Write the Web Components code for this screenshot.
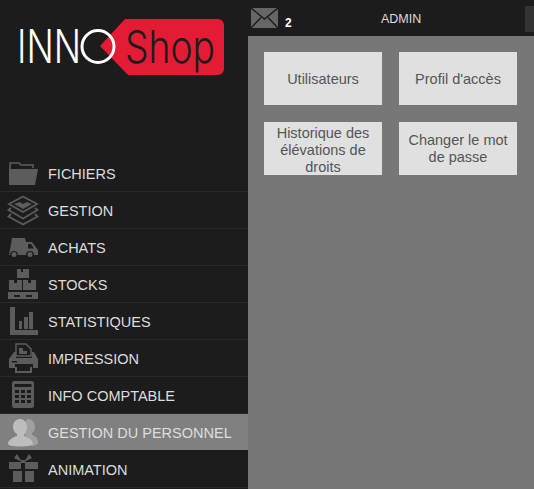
<!DOCTYPE html>
<html lang="fr">
<head>
<meta charset="utf-8">
<title>InnoShop</title>
<style>
html,body{margin:0;height:100%;overflow:hidden;background:#1c1c1c;}
body{font-family:"Liberation Sans",Arial,sans-serif;}
</style>
</head>
<body>
<app-shell>
  <inno-logo slot="logo"></inno-logo>
  <nav-item slot="nav" icon="folder">FICHIERS</nav-item>
  <nav-item slot="nav" icon="layers">GESTION</nav-item>
  <nav-item slot="nav" icon="truck">ACHATS</nav-item>
  <nav-item slot="nav" icon="stocks">STOCKS</nav-item>
  <nav-item slot="nav" icon="stats">STATISTIQUES</nav-item>
  <nav-item slot="nav" icon="printer">IMPRESSION</nav-item>
  <nav-item slot="nav" icon="calc">INFO COMPTABLE</nav-item>
  <nav-item slot="nav" icon="users" active>GESTION DU PERSONNEL</nav-item>
  <nav-item slot="nav" icon="gift">ANIMATION</nav-item>
  <top-bar slot="top" count="2">ADMIN</top-bar>
  <tile-button>Utilisateurs</tile-button>
  <tile-button>Profil d'accès</tile-button>
  <tile-button tall>Historique des élévations de droits</tile-button>
  <tile-button>Changer le mot de passe</tile-button>
</app-shell>
<script>
const icons = {
  folder: `<path d="M4 27V8h9l2 2h12v3" fill="none" stroke="currentColor" stroke-width="1.6"/><path d="M3 30V14h29l-3 16z" fill="currentColor"/>`,
  layers: `<path d="M17 4.500 31 12 17 20 3 12z" fill="none" stroke="currentColor" stroke-width="1.800"/><path d="M8 12l6-2 3 2 4-2 5 2-9 5z" fill="currentColor"/><path d="M5 16 2.500 18 17 26.500 31.500 18 29 16" fill="none" stroke="currentColor" stroke-width="1.800"/><path d="M5 22 2.500 24.500 17 32.500 31.500 24.500 29 22" fill="none" stroke="currentColor" stroke-width="1.800"/>`,
  truck: `<path d="M6 9h13l1 4h6l6 8v5h-4a4 4 0 0 0-8 0H12a4 4 0 0 0-8 0H3z" fill="currentColor"/><path d="M22 15h3l3 4.500h-6z" fill="#1c1c1c"/><circle cx="8" cy="25.500" r="2.500" fill="currentColor"/><circle cx="24" cy="25.500" r="2.500" fill="currentColor"/>`,
  stocks: `<path d="M11 3h4v3h2V3h6v9H11zM3 14h5v3h3v-3h5v10H3zM17 14h5v3h3v-3h5v10H17z" fill="currentColor"/><path d="M2 26h30v7H2z" fill="currentColor"/><path d="M8 29h6v2H8zM20 29h6v2h-6z" fill="#1c1c1c"/>`,
  stats: `<path d="M4 4h5v23h23v5H4z" fill="currentColor"/><path d="M13 18h3v8h-3zM18 14h4v12h-4zM23 9h4v17h-4z" fill="currentColor"/>`,
  printer: `<path d="M10 16V4h10l5 5v7z" fill="none" stroke="currentColor" stroke-width="1.500"/><path d="M13 8h4v3h4v3h-8z" fill="currentColor"/><path d="M8 12h2v6h16v-6h2l4 7v9h-5v-4H9v4H3v-9z" fill="currentColor"/><path d="M10 27v5h15v-5" fill="none" stroke="currentColor" stroke-width="2"/><path d="M6 21h5v1.500H6z" fill="#1c1c1c"/>`,
  calc: `<rect x="6" y="4" width="22" height="27" rx="2.500" fill="currentColor"/><path d="M8.500 7h17v3h-17z" fill="#1c1c1c"/><path d="M9 13h4v3H9zM15 13h4v3h-4zM21 13h4v3h-4zM9 18h4v3H9zM15 18h4v3h-4zM21 18h4v3h-4zM9 23h4v3H9zM15 23h4v3h-4zM21 23h4v3h-4z" fill="#1c1c1c"/>`,
  users: `<path d="M22 5c4 0 7 3 7 8 0 3-1 5-3 6v2c4 1 6 3 6 8 0 1-3 3-7 3 0-6-3-9-7-11 1-2 1-4 1-6 0-4 0-9 3-10z" fill="#a0a0a0"/><path d="M14 5c4 0 7 3 7 8 0 3-1 6-3 7v2c4 1 9 4 9 8 0 1-5 2.500-13 2.500S2 31 2 30c0-4 5-7 9-8v-2c-2-1-4-4-4-7 0-5 3-8 7-8z" fill="currentColor"/>`,
  gift: `<path d="M11 3l5 8-8-4zM23 3l-5 8 8-4z" fill="currentColor"/><path d="M3 11h12v7H3zM19 11h13v7H19zM15 9h4v3h-4zM7 20h9v11H7zM19 20h9v11h-9z" fill="currentColor"/>`
};

class AppShell extends HTMLElement {
  constructor() {
    super();
    this.attachShadow({ mode: "open" }).innerHTML = `<style>
      :host{display:grid;grid-template-columns:248px 1fr;grid-template-rows:36px 1fr;width:534px;height:489px;background:#1c1c1c;overflow:hidden;}
      .side{grid-row:1 / span 2;display:flex;flex-direction:column;}
      nav{display:flex;flex-direction:column;}
      main{background:#777;padding:16px;display:grid;grid-template-columns:118px 118px;grid-auto-rows:53px;gap:17px;align-content:start;}
    </style>
    <div class="side"><slot name="logo"></slot><nav><slot name="nav"></slot></nav></div>
    <slot name="top"></slot>
    <main><slot></slot></main>`;
  }
}

class InnoLogo extends HTMLElement {
  constructor() {
    super();
    this.attachShadow({ mode: "open" }).innerHTML = `<style>
      :host{display:block;height:155px;}
      svg{display:block;}
      text{font-family:Inter,"Liberation Sans",sans-serif;}
    </style>
    <svg width="248" height="155" viewBox="0 0 248 155">
      <path d="M125 19H218a6 6 0 0 1 6 6V69a6 6 0 0 1-6 6H130a4 4 0 0 1-3-1L100 46z" fill="#e31b34"/>
      <text x="17" y="63" font-weight="300" font-size="46" fill="#fff" textLength="64" lengthAdjust="spacingAndGlyphs">INN</text>
      <circle cx="98" cy="46.500" r="16" fill="none" stroke="#fff" stroke-width="3"/>
      <text x="125" y="63" font-weight="300" font-size="45" fill="#1c1c1c" textLength="90" lengthAdjust="spacingAndGlyphs">Shop</text>
    </svg>`;
  }
}

class TopBar extends HTMLElement {
  constructor() {
    super();
    const count = this.getAttribute("count");
    this.attachShadow({ mode: "open" }).innerHTML = `<style>
      :host{display:flex;align-items:flex-start;height:36px;background:#1c1c1c;position:relative;}
      .mail{display:block;margin:8px 0 0 3px;}
      .count{font:bold 12px "Liberation Sans",Arial,sans-serif;color:#fff;margin:16px 0 0 7px;width:96px;}
      .name{font-size:12.500px;line-height:14px;color:#ddd;margin-top:12px;width:144px;}
      .box{width:9px;height:26px;margin-top:6px;background:#333;}
    </style>
    <svg class="mail" width="27" height="20" viewBox="0 0 27 20">
      <path d="M0 0h27v20H0z" fill="#666"/>
      <path d="M0 0l13.500 11L27 0M0 20l10-10.500M27 20 17 9.500" fill="none" stroke="#1c1c1c" stroke-width="1.400"/>
    </svg>
    <span class="count">${count}</span>
    <span class="name"><slot></slot></span>
    <span class="box"></span>`;
  }
}

class NavItem extends HTMLElement {
  constructor() {
    super();
    const name = this.getAttribute("icon");
    this.attachShadow({ mode: "open" }).innerHTML = `<style>
      :host{display:flex;align-items:center;height:36px;border-bottom:1px solid #2a2a2a;color:#ddd;font-size:14.500px;background:#1c1c1c;}
      :host([active]){background:#808080;border-bottom-color:#1c1c1c;}
      svg{display:block;width:34px;height:36px;margin:0 8px 0 6px;color:#5c5c5c;flex:none;}
      :host([active]) svg{color:#bdbdbd;}
      span{padding-top:1px;}
    </style>
    <svg viewBox="0 0 34 36">${icons[name]}</svg><span><slot></slot></span>`;
  }
}

class TileButton extends HTMLElement {
  constructor() {
    super();
    this.attachShadow({ mode: "open" }).innerHTML = `<style>
      :host{display:flex;align-items:center;justify-content:center;text-align:center;background:#e0e0e0;color:#555;font-size:14.500px;line-height:17px;padding:1px 8px 0;box-sizing:border-box;}
      :host([tall]){padding-top:3px;}
    </style><slot></slot>`;
  }
}

customElements.define("app-shell", AppShell);
customElements.define("inno-logo", InnoLogo);
customElements.define("top-bar", TopBar);
customElements.define("nav-item", NavItem);
customElements.define("tile-button", TileButton);
</script>
</body>
</html>
